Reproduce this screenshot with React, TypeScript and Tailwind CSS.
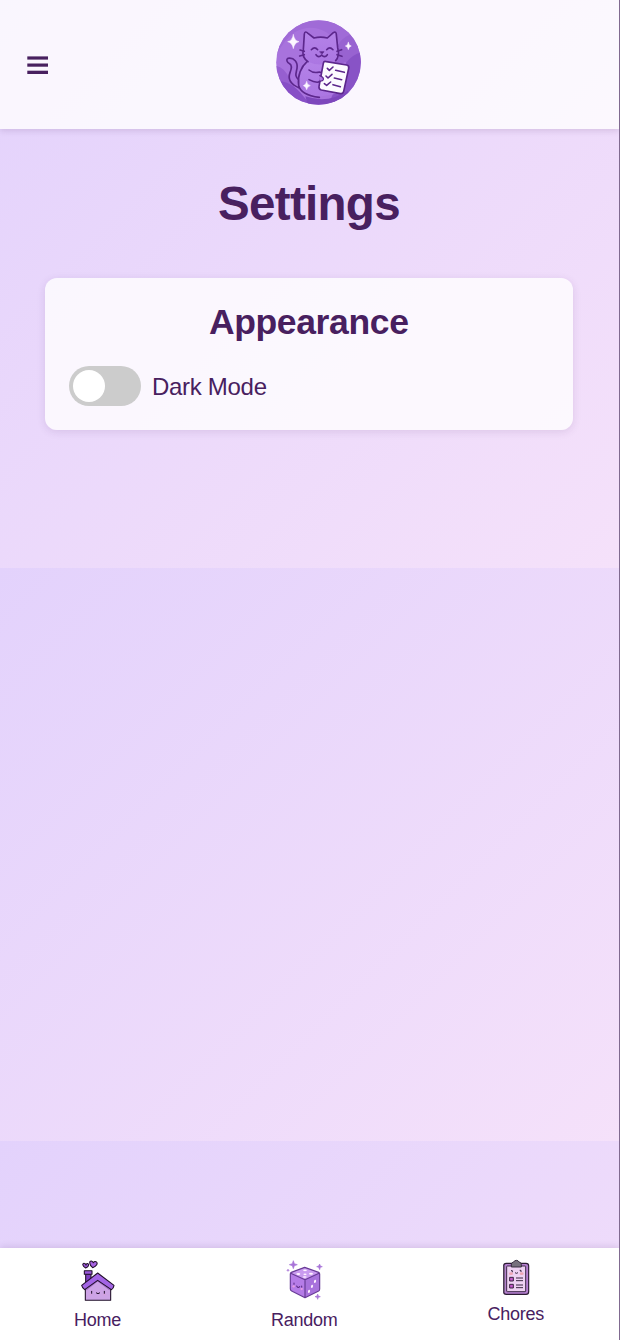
import React from "react";

function CatLogo() {
  return (
    <svg viewBox="24 23 255 255" className="block size-[85px]" fill="none" strokeLinecap="round" strokeLinejoin="round">
      <defs>
        <clipPath id="disc"><circle cx="151.5" cy="150.5" r="127" /></clipPath>
        <linearGradient id="fur" x1="0" y1="0" x2="0" y2="1">
          <stop offset="0" stopColor="#b482e8" />
          <stop offset="1" stopColor="#ab76e2" />
        </linearGradient>
      </defs>
      <g clipPath="url(#disc)">
        <rect x="24" y="23" width="256" height="256" fill="#a873dd" />
        <path d="M24 24H280V60Q230 70 215 95Q150 20 80 60Q50 80 24 130Z" fill="#a06bd7" />
        <path d="M205 105Q230 60 280 62V150Q245 140 205 160Z" fill="#9863d1" />
        <path d="M235 150Q255 125 280 120V280H180Z" fill="#8853c6" />
        <path d="M24 160Q50 165 65 200L110 280H24Z" fill="#965fd0" />
        <path d="M24 205Q70 205 105 250L130 280H24Z" fill="#874fc6" />
        <path d="M112 252Q180 275 240 235V280H120Z" fill="#7d47bc" />
        <path d="M94 227C68 216 59 199 66 181C72 166 72 158 65 154C56 150 54 141 60 138C79 135 90 150 87 168C84 184 79 192 93 203Z" fill="#a972df" stroke="#5c278c" strokeWidth="5" />
        <path d="M118 147C99 163 88 190 92 219C96 239 116 250 141 255L205 244L196 150Z" fill="url(#fur)" />
        <path d="M118 147C99 163 88 190 92 219C96 239 116 250 154 255" stroke="#5c278c" strokeWidth="5" />
        <path d="M120 148C105 138 103 124 106 112L109 65C110 57 115 58 120 63L138 77Q158 72 178 77L196 61C202 57 205 60 205 67L209 106C213 121 211 136 203 145Q157 166 120 148Z" fill="url(#fur)" />
        <path d="M120 148C105 138 103 124 106 112L109 65C110 57 115 58 120 63L138 77Q158 72 178 77L196 61C202 57 205 60 205 67L209 106C213 121 211 136 203 145" stroke="#5c278c" strokeWidth="5" />
        <path d="M130 112Q140 101 149 112M176 112Q185 101 195 112M144 127Q152 138 161 128Q170 138 178 127M96 113L109 117M95 131L109 127M207 117L221 112M207 127L222 132" stroke="#5c278c" strokeWidth="4.8" />
        <path d="M156 118H168L162 125Z" fill="#5c278c" stroke="#5c278c" strokeWidth="2" />
        <path d="M123 173Q136 184 155 179M123 202Q145 214 159 207M157 180Q166 178 170 185" stroke="#5c278c" strokeWidth="4.8" />
        <path d="M175 148Q168 145 166 153L153 223Q152 231 160 233L217 244Q225 245 227 237L242 168Q244 160 236 158Z" fill="#fcfaff" stroke="#5c278c" strokeWidth="5" />
        <path d="M178 168L184 174L195 164M174 191L180 197L192 186M169 214L176 219L188 209M203 174L229 180M199 197L221 202M195 217L217 223" stroke="#5c278c" strokeWidth="4.8" />
        <path d="M155 190Q168 195 166 202Q164 207 154 206" fill="#b17be6" stroke="#5c278c" strokeWidth="3.5" />
        <path d="M76 67Q79 85 93 88Q79 91 76 109Q73 91 59 88Q73 85 76 67ZM241 90Q242 99 250 101Q242 103 241 112Q240 103 232 101Q240 99 241 90ZM116 208Q118 218 127 220Q118 222 116 232Q114 222 106 220Q114 218 116 208Z" fill="#fcf7ff" stroke="#fcf7ff" strokeWidth="1.5" />
      </g>
    </svg>
  );
}

function MenuIcon() {
  return (
    <svg viewBox="0 0 21 18" className="block h-[18px] w-[21px]" fill="#48205f">
      <rect x="0.3" y="0.4" width="20.7" height="3.2" />
      <rect x="0.3" y="7.5" width="20.7" height="3.2" />
      <rect x="0.3" y="14.7" width="20.7" height="3.3" />
    </svg>
  );
}

function HouseIcon() {
  return (
    <svg viewBox="45 57 102 129" className="block h-[43px] w-[34px]" stroke="#211029" strokeWidth="3.2" strokeLinejoin="round">
      <path d="M59 84C48 77 49 70 54 70Q58 70 60 75Q62 69 66 71C71 75 66 81 59 84Z" fill="#9955d8" />
      <path d="M80 83C68 73 70 62 76 63Q80 64 82 68Q85 63 90 65C98 70 91 79 80 83Z" fill="#a763e3" />
      <path d="M59 102H75V120L59 132Z" fill="#7f3fc2" />
      <path d="M55 92H78V103H55Z" fill="#9a59dc" />
      <path d="M58 144L95 114L134 144V181H58Z" fill="#cda3e6" />
      <path d="M61 149L95 122L131 149" fill="none" stroke="#a36fc9" strokeWidth="4" />
      <path d="M95 99L47 136Q49 144 56 149L95 121L136 149Q143 145 144 136Z" fill="#a365e5" />
      <path d="M77 154V160M115 154V160M91 159Q96 164 101 159" fill="none" strokeWidth="3" strokeLinecap="round" />
      <path d="M70 164H77M112 164H119" stroke="#d99fd9" strokeWidth="3" />
    </svg>
  );
}

function DiceIcon() {
  return (
    <svg viewBox="66 60 111 120" className="block h-10 w-[37px]" strokeLinejoin="round">
      <path d="M88 62L91 71L100 74L91 77L88 86L85 77L76 74L85 71ZM167 72L169 78L175 80L169 82L167 89L164 82L158 80L164 78ZM161 162L163 168L169 170L163 172L161 178L159 172L153 170L159 168ZM72 88L75 91L72 94L69 91Z" fill="#a873d8" stroke="#a873d8" strokeWidth="2" />
      <path d="M122 82L165 98Q167 99 167 102V147Q167 151 164 153L123 173L83 153Q79 151 79 147V102Q79 99 82 97Z" fill="#b57ce7" />
      <path d="M122 82L165 99L123 119L80 99Z" fill="#c99bef" />
      <path d="M123 119L167 99V149L123 173Z" fill="#a872dc" />
      <path d="M122 82L164 97Q167 99 167 102V147Q167 151 164 153L123 173L83 153Q79 151 79 147V102Q79 99 82 97ZM80 100L123 119L165 100M123 119V173" fill="none" stroke="#683c96" strokeWidth="3.5" />
      <g fill="#fff3ff">
        <ellipse cx="123" cy="91" rx="6" ry="2.5" /><ellipse cx="103" cy="102" rx="6" ry="3" />
        <ellipse cx="123" cy="103" rx="5" ry="2.5" /><ellipse cx="141" cy="101" rx="6" ry="3" /><ellipse cx="122" cy="111" rx="6" ry="2.5" />
        <ellipse cx="153" cy="124" rx="3" ry="5" transform="rotate(18 153 124)" />
        <ellipse cx="144" cy="139" rx="3" ry="5" transform="rotate(18 144 139)" />
        <ellipse cx="135" cy="154" rx="3" ry="5" transform="rotate(18 135 154)" />
      </g>
      <path d="M90 129V133M113 138V142M98 138Q102 146 107 140" fill="none" stroke="#5c2b85" strokeWidth="3.2" strokeLinecap="round" />
      <circle cx="89" cy="139" r="3.5" fill="#e59be0" /><circle cx="113" cy="147" r="3.5" fill="#e59be0" />
    </svg>
  );
}

function ClipboardIcon() {
  return (
    <svg viewBox="66 57 84 111" className="block h-[37px] w-7" strokeLinejoin="round">
      <rect x="71" y="70" width="75" height="93" rx="8" fill="#b57fd0" stroke="#2c1b34" strokeWidth="3.5" />
      <path d="M73 78V156" stroke="#75617f" strokeWidth="4" />
      <rect x="80" y="78" width="57" height="77" rx="2" fill="#eed1f2" stroke="#34203d" strokeWidth="2.8" />
      <path d="M94 81V72Q95 67 101 66Q103 61 109 61Q115 61 117 66Q124 67 124 73V81Z" fill="#77717d" stroke="#33283a" strokeWidth="2.8" />
      <path d="M93 92H97V97M119 91H123V96M105 98Q109 102 114 98" fill="none" stroke="#2c1b34" strokeWidth="2.8" />
      <ellipse cx="93" cy="101" rx="6" ry="4" fill="#eea6b6" /><ellipse cx="125" cy="101" rx="6" ry="4" fill="#eea6b6" />
      <g stroke="#2c1b34" strokeWidth="2.8">
        <rect x="89" y="112" width="11" height="11" fill="#c558cb" />
        <rect x="89" y="133" width="11" height="11" fill="#c558cb" />
        <path d="M108 114H129M108 122H129M108 135H129M108 143H129" />
      </g>
    </svg>
  );
}

function NavItem({ icon, label }: { icon: React.ReactNode; label: string }) {
  return (
    <a className="flex flex-col items-center text-[18px] leading-5 tracking-[-0.25px] whitespace-nowrap">
      {icon}
      {label}
    </a>
  );
}

export default function App() {
  return (
    <div className="flex h-[1340px] w-[620px] flex-col overflow-hidden border-r border-[#806a90] bg-[linear-gradient(135deg,#e3d2fc,#f5e1fa)] bg-size-[619px_573px] bg-position-[0_-5px] bg-repeat font-['Liberation_Sans',Arial,sans-serif] text-[#48205f]">
      <header className="grid h-[129px] shrink-0 grid-cols-[1fr_85px_1fr] items-center bg-white/80 shadow-[0_2px_6px_rgba(72,32,95,0.15)]">
        <button className="ml-[27px] w-fit"><MenuIcon /></button>
        <div className="mb-[5px] ml-[9px]"><CatLogo /></div>
      </header>
      <main className="flex flex-1 flex-col pr-[46px] pl-[45px]">
        <h1 className="mt-[47px] text-center text-[47.5px] leading-[56px] font-bold tracking-[-0.7px]">Settings</h1>
        <section className="mt-[46px] h-[152px] rounded-xl bg-white/80 pt-6 pr-6 pl-[23.5px] shadow-[0_2px_9px_rgba(72,32,95,0.12)]">
          <h2 className="text-center text-[35.5px] leading-[40px] font-bold tracking-[-0.35px]">Appearance</h2>
          <label className="mt-6 flex items-center gap-[11px]">
            <span className="flex h-10 w-[72.5px] items-center rounded-full bg-[#ccc] pl-1">
              <span className="size-8 rounded-full bg-white" />
            </span>
            <span className="pt-0.5 text-[24px] leading-8 tracking-[-0.3px]">Dark Mode</span>
          </label>
        </section>
      </main>
      <nav className="flex h-[92px] shrink-0 items-start justify-between bg-white pt-[11px] pr-[75px] pl-[74px] shadow-[0_-2px_6px_rgba(72,32,95,0.12)]">
        <NavItem label="Home" icon={<div className="mb-2"><HouseIcon /></div>} />
        <NavItem label="Random" icon={<div className="pt-px pb-2.5"><DiceIcon /></div>} />
        <NavItem label="Chores" icon={<div className="mb-2"><ClipboardIcon /></div>} />
      </nav>
    </div>
  );
}
